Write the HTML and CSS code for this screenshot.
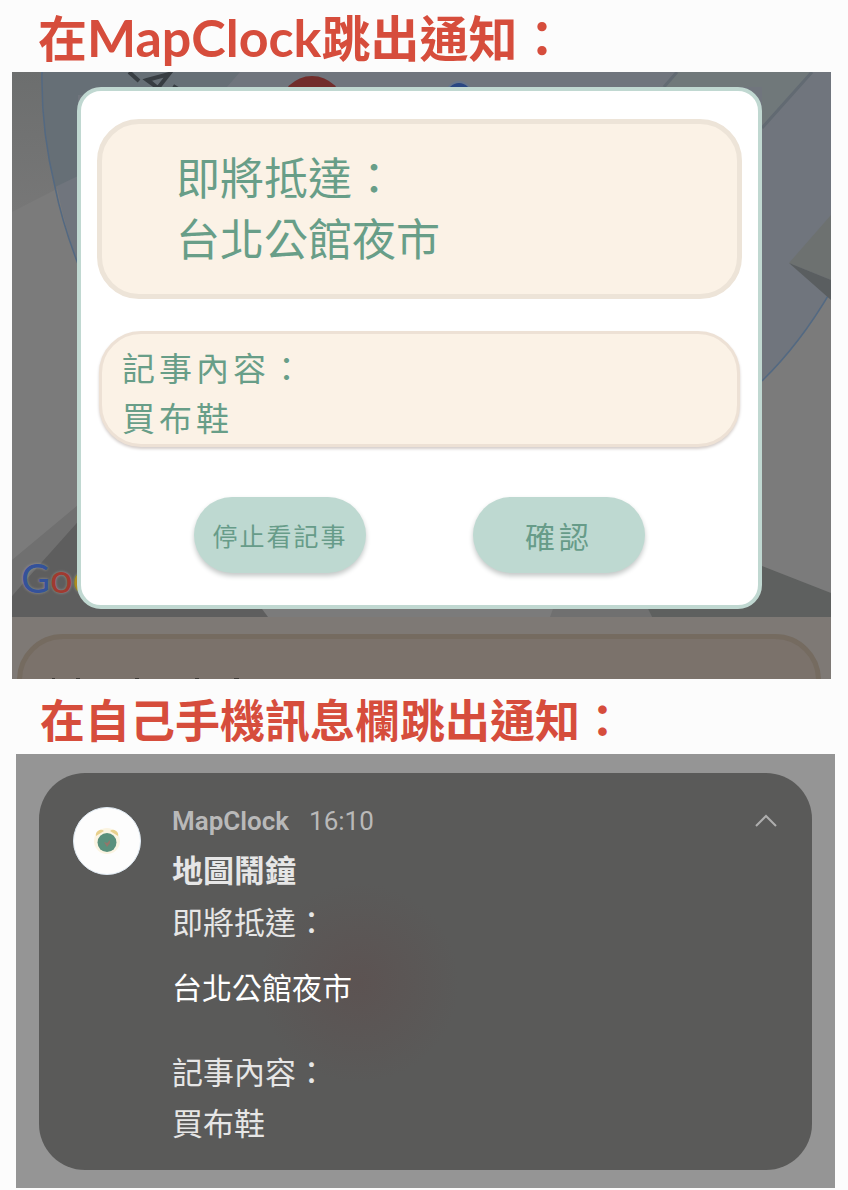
FILE: index.html
```html
<!DOCTYPE html>
<html lang="zh-Hant">
<head>
<meta charset="utf-8">
<meta name="viewport" content="width=device-width, initial-scale=1">
<title>MapClock</title>
<link rel="stylesheet" href="styles.css">
</head>
<body>
<main>
  <h1 class="heading heading-app">在<span class="brand">MapClock</span>跳出通知：</h1>

  <section class="screen">
    <svg class="map" viewBox="12 72 819 545" preserveAspectRatio="xMidYMin slice" aria-hidden="true">
      <defs>
        <linearGradient id="shade" x1="0" y1="0" x2="0" y2="1">
          <stop offset="0" stop-color="#6c6e6e"/>
          <stop offset="1" stop-color="#777"/>
        </linearGradient>
      </defs>
      <rect x="12" y="72" width="819" height="545" fill="#7b7b7b"/>
      <path d="M12 72H90V172L12 212Z" fill="url(#shade)"/>
      <path d="M42 72C41 110 46 150 55 177C60 205 68 235 80 270V400H762V381Q800 344 831 291V72Z" fill="#70757d"/>
      <path d="M42 72H240L220 95H78V176L55 187Q41 130 42 72Z" fill="#666f76"/>
      <path d="M677 72H812L762 128V87H664Z" fill="#70787a"/>
      <path d="M677 72L664 87M812 72L762 128" stroke="#626a72" stroke-width="3" fill="none"/>
      <path d="M42 72Q41 130 55 187Q62 222 78 264M762 381Q800 344 831 291" stroke="#536982" stroke-width="1.5" fill="none"/>
      <path d="M789 263L831 215V280Z" fill="#6d7170"/>
      <path d="M789 263L831 280V300Z" fill="#5a5e60"/>
      <path d="M12 560L78 505V525L12 596Z" fill="#707070"/>
      <path d="M12 596L42 562L100 497V609H262L268 617H12Z" fill="#5e5e5e"/>
      <path d="M553 609H648L652 617H550Z" fill="#707070"/>
      <path d="M648 609L740 574L762 566L831 593V617H652Z" fill="#5e605f"/>
      <path d="M129 72L139 81" stroke="#373d42" stroke-width="4"/>
      <path d="M147 80L169 74L158 88ZM148 80L160 90M173 86L178 89" stroke="#373d42" stroke-width="4" fill="none"/>
      <circle cx="312" cy="108" r="32" fill="#722d2b"/>
      <circle cx="459" cy="94" r="13" fill="#66758c"/>
      <circle cx="459" cy="95" r="12" fill="#294682"/>
    </svg>
    <div class="google" aria-label="Google"><span class="g-blue">G</span><span class="g-red">o</span><span class="g-yellow">o</span></div>
    <div class="sheet-area">
      <div class="sheet">
        <svg class="sheet-marks" viewBox="0 0 200 2" aria-hidden="true"><path d="M0 2h3M24 2h4M83 2h4M143 2h4M182 2h5" stroke="#3e3a36" stroke-width="2"/></svg>
      </div>
    </div>

    <div class="dialog" role="dialog" aria-label="即將抵達">
      <div class="card arrival">
        <p>即將抵達：</p>
        <p>台北公館夜市</p>
      </div>
      <div class="card memo">
        <p>記事內容：</p>
        <p>買布鞋</p>
      </div>
      <div class="actions">
        <button class="action action-stop" type="button">停止看記事</button>
        <button class="action action-ok" type="button">確認</button>
      </div>
    </div>
  </section>

  <h2 class="heading heading-phone">在自己手機訊息欄跳出通知：</h2>

  <section class="panel">
    <article class="notice">
      <svg class="avatar" viewBox="0 0 68 68" aria-hidden="true">
        <circle cx="34" cy="34" r="33.5" fill="#fdfdfd" stroke="#dfe9f2"/>
        <circle cx="34" cy="34" r="13" fill="#fbf4e2"/>
        <path d="M23 29a5 5 0 0 1 8-5zM45 29a5 5 0 0 0-8-5z" fill="#e8d08c"/>
        <circle cx="34" cy="35.500" r="9.500" fill="#5a907c"/>
        <path d="M31 35l3 1 3-3v3l-3 4z" fill="#93766a"/>
      </svg>
      <div class="notice-body">
        <header class="notice-head">
          <span class="app-name">MapClock</span>
          <time class="time">16:10</time>
          <button class="collapse" type="button" aria-label="收合">
            <svg viewBox="0 0 24 14" aria-hidden="true"><path d="M2 12L12 2L22 12" fill="none" stroke="#aeaeae" stroke-width="2"/></svg>
          </button>
        </header>
        <h3 class="notice-title">地圖鬧鐘</h3>
        <p class="line">即將抵達：</p>
        <p class="line place">台北公館夜市</p>
        <p class="line">記事內容：</p>
        <p class="line">買布鞋</p>
      </div>
    </article>
  </section>
</main>
</body>
</html>
```

FILE: styles.css
```css
* { box-sizing: border-box; }

body {
  margin: 0;
  background: #fcfcfc;
  font-family: "Noto Sans CJK TC", "Noto Sans", sans-serif;
}

h1, h2, h3, p { margin: 0; font-weight: 400; }

button {
  border: 0;
  padding: 0;
  background: none;
  font-family: inherit;
  cursor: pointer;
}

.heading {
  color: #d64d3c;
  font-weight: 700;
  white-space: nowrap;
}

.heading-app {
  padding: 2px 38px;
  font-size: 49px;
  line-height: 68px;
}

.brand {
  font-family: Lato, Inter, sans-serif;
  font-size: 52px;
  line-height: 60px;
}

.heading-phone {
  padding: 10px 40px 5px;
  font-size: 45px;
  line-height: 60px;
}

.screen {
  position: relative;
  overflow: hidden;
  margin: 0 17px 0 12px;
  padding: 15px 69px 70px 65px;
  background: #7b7b7b;
}

.map {
  position: absolute;
  top: 0;
  left: 0;
  width: 100%;
  height: 545px;
}

.google {
  position: absolute;
  left: 9px;
  bottom: 78px;
  font: 40px/46px Lato, sans-serif;
  text-shadow: 0 0 3px #999;
}

.g-blue { color: #34529a; }
.g-red { color: #a03a30; }
.g-yellow { color: #b08a20; }

.sheet-area {
  position: absolute;
  left: 0;
  right: 0;
  bottom: 0;
  overflow: hidden;
  height: 62px;
  padding: 17px 10px 0 5px;
  background: #7e7975;
}

.sheet {
  height: 100px;
  padding: 38px 30px;
  border: 5px solid #756b60;
  border-radius: 46px;
  background: #7b726b;
}

.sheet-marks { display: block; width: 200px; height: 2px; }

.dialog {
  position: relative;
  padding: 28px 16px 32px;
  border: 4px solid #c0d8d1;
  border-radius: 24px;
  background: #fff;
}

.card {
  background: #fbf2e6;
  color: #689e88;
}

.arrival {
  padding: 22px 74px 26px;
  border: 5px solid #ede4d8;
  border-radius: 42px;
  font-size: 44px;
  line-height: 61px;
}

.memo {
  margin: 32px 2px 0;
  padding: 8px 20px 2px;
  border: 3px solid #ede1d5;
  border-radius: 42px;
  box-shadow: 0 2px 3px #d5cecb;
  font-size: 33px;
  line-height: 50px;
  letter-spacing: 4px;
}

.actions {
  display: flex;
  justify-content: center;
  gap: 107px;
  margin-top: 50px;
}

.action {
  width: 172px;
  height: 76px;
  border-radius: 38px;
  background: #bed9d1;
  box-shadow: 0 3px 5px #c4c8c7;
  color: #679c89;
}

.action-stop { font-size: 25px; letter-spacing: 2px; }
.action-ok { font-size: 30px; letter-spacing: 4px; }

.panel {
  margin: 0 13px 2px 16px;
  padding: 19px 23px 18px;
  background: #959595;
}

.notice {
  display: flex;
  gap: 31px;
  padding: 26px 34px 23px;
  border-radius: 46px;
  background: radial-gradient(circle at 320px 210px, #5c5352 0, #5a5a59 100px);
  color: #e6e6e6;
}

.avatar {
  flex: none;
  width: 68px;
  height: 68px;
  margin-top: 8px;
}

.notice-body { flex: 1; }

.notice-head {
  display: flex;
  align-items: center;
  gap: 20px;
  height: 44px;
  color: #b9b9b9;
  font-family: Roboto, "Noto Sans", sans-serif;
  font-size: 26px;
}

.app-name { font-weight: 600; }

.collapse {
  display: flex;
  margin-left: auto;
}

.collapse svg { width: 24px; height: 14px; }

.notice-title {
  font-size: 31px;
  font-weight: 700;
  line-height: 52px;
}

.line {
  font-size: 31px;
  line-height: 51px;
}

.place {
  padding: 15px 0 33px;
  color: #fff;
  font-size: 30px;
}
```
